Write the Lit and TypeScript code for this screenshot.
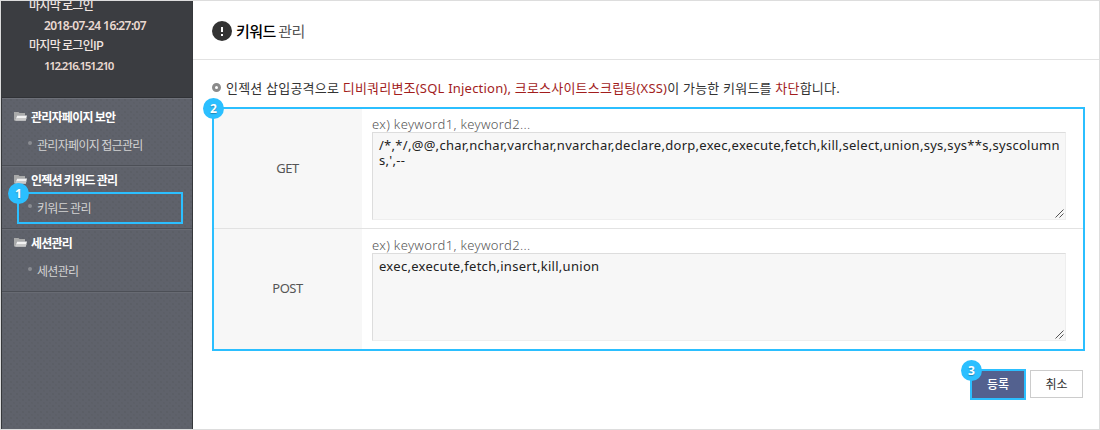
import { LitElement, html, css } from "lit";
import { customElement, property } from "lit/decorators.js";

@customElement("step-badge")
class StepBadge extends LitElement {
  @property() label = "";
  static styles = css`
    :host { position: absolute; display: flex; width: 21px; height: 21px; border-radius: 50%;
      background: #2bbfff; color: #fff; align-items: center; justify-content: center;
      font: bold 12px/21px "Noto Sans", sans-serif; letter-spacing: 0; text-shadow: 0 1px 1px #2487b4; z-index: 2; }
    .num { position: relative; top: -0.5px; }
  `;
  render() { return html`<span class="num">${this.label}</span>`; }
}

@customElement("menu-group")
class MenuGroup extends LitElement {
  @property() heading = "";
  @property() item = "";
  @property() step = "";
  static styles = css`
    :host { display: block; height: 62px; border-bottom: 1px solid #4c4f56; box-sizing: content-box; box-shadow: 0 1px #686b73; }
    .head { display: flex; align-items: center; height: 26px; padding: 1px 0 0 12px; gap: 3px;
      color: #fff; font-weight: 700; letter-spacing: -0.75px; white-space: nowrap; }
    .head svg { display: block; margin-top: -1px; }
    .item { position: relative; display: flex; align-items: center; height: 32px; margin: -1px 9px 0 15px;
      padding-left: 11px; gap: 5px; color: #d3d3d3; letter-spacing: -0.68px; white-space: nowrap; }
    .item.on { box-shadow: inset 0 0 0 2px #2bbfff; }
    .dot { width: 4px; height: 4px; border-radius: 50%; background: #8a8c92; margin-top: -5px; }
    step-badge { left: -9px; top: -9px; }
  `;
  render() {
    return html`
      <div class="head">
        <svg width="14" height="11" viewBox="0 0 14 11">
          <path d="M0 9.500V1h4.500l1 1H11v2.500H3L1 9.500z" fill="#a9aaaa"/>
          <path d="M3 4.500H13L11.800 9.500H1.200z" fill="#f2f2f2"/>
          <path d="M2.100 7h10.300l-.6 2.500H1.200z" fill="#c9c9c9"/>
        </svg>
        <span>${this.heading}</span>
      </div>
      <div class="item ${this.step ? "on" : ""}">
        <span class="dot"></span><span>${this.item}</span>
        ${this.step ? html`<step-badge label=${this.step}></step-badge>` : ""}
      </div>`;
  }
}

@customElement("keyword-row")
class KeywordRow extends LitElement {
  @property() method = "";
  @property() lines: string[] = [];
  static styles = css`
    :host { display: flex; flex: none; height: 119px; }
    .th { box-sizing: border-box; width: 148px; flex: none; background: #f7f7f7; color: #555; font-size: 13px; letter-spacing: -0.5px;
      display: flex; align-items: center; justify-content: center; padding: 0 1px 2px 0; }
    .td { flex: 1; min-width: 0; padding: var(--pad, 6px) 17px 0 10px; }
    .hint { height: 17px; line-height: 18px; color: #555; font-size: 13px; font-weight: 300; letter-spacing: 0.35px; white-space: nowrap; }
    .area { position: relative; box-sizing: border-box; height: 88px; border: 1px solid #ddd;
      border-right-color: #eee; border-bottom-color: #eee; background: #f7f7f7; padding: 5px 6px;
      color: #222; font-size: 13px; line-height: 15px; white-space: pre; letter-spacing: 0.285px; }
    .grip { position: absolute; right: 1px; bottom: 1px; }
  `;
  render() {
    return html`
      <div class="th">${this.method}</div>
      <div class="td">
        <div class="hint">ex) keyword1, keyword2...</div>
        <div class="area">${this.lines.map((l) => html`<div>${l}</div>`)}
          <svg class="grip" width="9" height="9" viewBox="0 0 9 9"><path d="M.5 8.5l8-8M4.5 8.5l4-4" stroke="#555" fill="none"/></svg>
        </div>
      </div>`;
  }
}

@customElement("app-root")
class AppRoot extends LitElement {
  static styles = css`
    :host { display: flex; box-sizing: border-box; width: 1100px; height: 430px; border: 1px solid #ddd;
      background: #fff; font: 12px/20px "Noto Sans", "Noto Sans CJK KR", sans-serif; overflow: hidden; }
    .side { box-sizing: border-box; width: 192px; flex: none; border: solid #36383b; border-width: 0 1px;
      color: #d3d3d3; background: #5f626b;
      background-image: radial-gradient(#5a5d65 0.5px, transparent 1.2px), radial-gradient(#5c5f67 0.5px, transparent 1.2px);
      background-size: 6px 6px; background-position: 0 0, 3px 3px; font-family: "Noto Sans CJK KR", sans-serif; }
    .login { height: 96px; border-bottom: 1px solid #303236; box-shadow: 0 1px #6d7078; background: #3b3d41;
      overflow: hidden; display: flex; flex-direction: column; }
    .login div { height: 20px; flex: none; padding-left: 27px; color: #f1e6e0; letter-spacing: -0.7px; white-space: nowrap; font-weight: 500; }
    .login div:first-child { margin-top: -6px; }
    .login .val { position: relative; top: 1px; padding-left: 42px; font-weight: 600; color: #ead9d1; font-family: "Noto Sans", sans-serif; letter-spacing: -0.6px; }
    .login .val.ip { letter-spacing: -1.3px; font-size: 11.5px; }
    .menu { padding-top: 5px; }
    .main { flex: 1; min-width: 0; }
    .title { display: flex; align-items: center; border-bottom: 1px solid #e2e2e2;
      padding: 2px 0 0 19px; box-sizing: content-box; height: 56px; gap: 4px; font: 15px/22px "Noto Sans CJK KR", sans-serif;
      letter-spacing: -0.6px; color: #555; }
    .title b { font-weight: 500; color: #000; }
    .desc { display: flex; align-items: center; height: 20px; margin-top: 18px; padding-left: 19px; gap: 5px;
      font-size: 13px; color: #333; letter-spacing: 0.21px; white-space: nowrap; }
    .desc em { font-style: normal; color: #a21d1d; }
    .ring { box-sizing: border-box; width: 9px; height: 9px; border: 3px solid #8b8b8b; border-radius: 50%; position: relative; top: -1px; }
    .table { position: relative; box-sizing: border-box; width: 873px; height: 244px; margin: 9px 0 0 19px;
      border: 2px solid #2bbfff; display: flex; flex-direction: column; }
    .table keyword-row + keyword-row { border-top: 1px solid #e2e2e2; height: 120px; --pad: 7px; }
    .table step-badge { left: -11px; top: -11px; }
    .actions { display: flex; justify-content: flex-end; align-items: flex-start; gap: 4px; margin-top: 18px; padding-right: 16px; }
    .btn { position: relative; box-sizing: border-box; height: 28px; width: 53px; border: 1px solid #ccc; background: #fff; color: #333;
      display: flex; align-items: center; justify-content: center; padding-bottom: 1px; margin-top: 1px; font-family: "Noto Sans CJK KR", sans-serif; }
    .btn.ok { width: 56px; height: 31px; margin-top: 0; border: 2px solid #2bbfff; background: #53618f; color: #fff; font-weight: 500; }
    .ok step-badge { left: -11px; top: -11px; }
  `;
  render() {
    return html`
      <div class="side">
        <div class="login">
          <div>마지막 로그인</div>
          <div class="val">2018-07-24 16:27:07</div>
          <div>마지막 로그인IP</div>
          <div class="val ip">112.216.151.210</div>
        </div>
        <div class="menu">
          <menu-group heading="관리자페이지 보안" item="관리자페이지 접근관리"></menu-group>
          <menu-group heading="인젝션 키워드 관리" item="키워드 관리" step="1"></menu-group>
          <menu-group heading="세션관리" item="세션관리"></menu-group>
        </div>
      </div>
      <div class="main">
        <div class="title">
          <svg width="20" height="20" viewBox="0 0 20 20"><circle cx="10" cy="10" r="10" fill="#333"/><path d="M9 6h2v5H9zM9 13h2v2H9z" fill="#fff"/></svg>
          <span><b>키워드</b> 관리</span>
        </div>
        <div class="desc"><span class="ring"></span><span>인젝션 삽입공격으로 <em>디비쿼리변조(SQL Injection), 크로스사이트스크립팅(XSS)</em>이 가능한 키워드를 <em>차단</em>합니다.</span></div>
        <div class="table">
          <keyword-row method="GET" .lines=${["/*,*/,@@,char,nchar,varchar,nvarchar,declare,dorp,exec,execute,fetch,kill,select,union,sys,sys**s,syscolumn", "s,',--"]}></keyword-row>
          <keyword-row method="POST" .lines=${["exec,execute,fetch,insert,kill,union"]}></keyword-row>
          <step-badge label="2"></step-badge>
        </div>
        <div class="actions">
          <div class="btn ok">등록<step-badge label="3"></step-badge></div>
          <div class="btn">취소</div>
        </div>
      </div>`;
  }
}
